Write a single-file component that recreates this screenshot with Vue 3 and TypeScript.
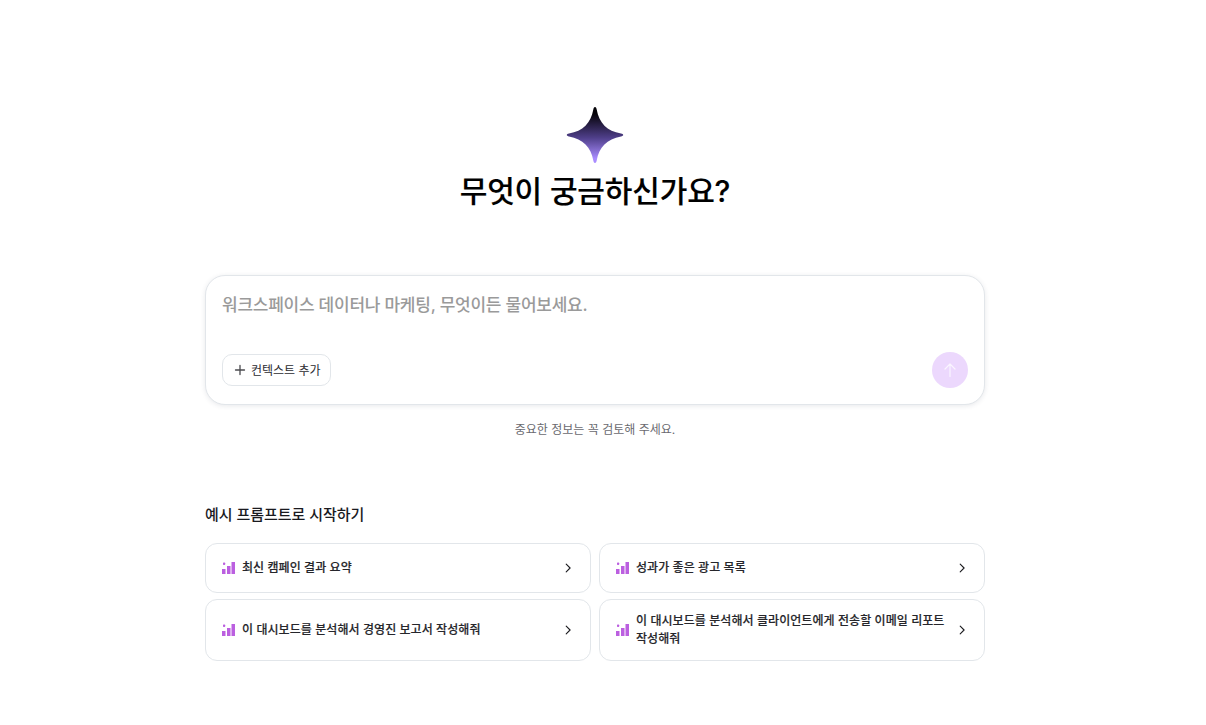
<template>
  <div class="page">
    <main class="content">
      <!-- 상단 로고 + 타이틀 -->
      <section class="hero">
        <svg class="spark" width="58" height="58" viewBox="0 0 58 58">
          <defs>
            <linearGradient id="sparkFill" x1="0" y1="0" x2="0" y2="1">
              <stop offset="0.12" stop-color="#050308" />
              <stop offset="0.55" stop-color="#4f3f8a" />
              <stop offset="0.92" stop-color="#a98cff" />
            </linearGradient>
          </defs>
          <path
            d="M29 1C30 1 30.4 2 30.7 3.5C33 17 41 25 55 27.6C56.4 27.9 57.2 28.3 57.2 29C57.2 29.7 56.4 30.1 55 30.4C41 33 33 41 30.7 54.5C30.4 56 30 57 29 57C28 57 27.6 56 27.3 54.5C25 41 17 33 3 30.4C1.6 30.1 .8 29.7 .8 29C.8 28.3 1.6 27.9 3 27.6C17 25 25 17 27.3 3.5C27.6 2 28 1 29 1Z"
            fill="url(#sparkFill)"
          />
        </svg>
        <h1>무엇이 궁금하신가요?</h1>
      </section>

      <!-- 입력 박스 -->
      <section class="composer">
        <div class="placeholder">워크스페이스 데이터나 마케팅, 무엇이든 물어보세요.</div>
        <div class="composer-foot">
          <button class="context-btn" type="button">
            <svg width="12" height="12" viewBox="0 0 12 12" fill="none" stroke="#4b4b4f" stroke-width="1.3" stroke-linecap="round">
              <path d="M6 1.5v9M1.5 6h9" />
            </svg>
            <span class="context-text">컨텍스트 추가</span>
          </button>
          <button class="send-btn" type="button" aria-label="전송">
            <svg width="16" height="16" viewBox="0 0 16 16" fill="none" stroke="#fff" stroke-opacity="0.75" stroke-width="1.2" stroke-linecap="round" stroke-linejoin="round">
              <path d="M8 14.5V2M3 7l5-5 5 5" />
            </svg>
          </button>
        </div>
      </section>
      <p class="notice">중요한 정보는 꼭 검토해 주세요.</p>

      <!-- 예시 프롬프트 -->
      <section class="examples">
        <h2>예시 프롬프트로 시작하기</h2>
        <div class="grid">
          <div v-for="item in prompts" :key="item.id" class="card" :class="{ tall: item.tall }">
            <svg class="bars" width="14" height="14" viewBox="0 0 14 14">
              <g fill="#bb5fe0">
                <rect x="1" y="1.5" width="2.2" height="2.4" rx="0.7" />
                <rect x="0" y="8" width="3.5" height="5" />
                <rect x="5" y="5" width="3.5" height="8" />
                <rect x="9.5" y="1" width="3.5" height="12" />
              </g>
            </svg>
            <span class="label">{{ item.title }}</span>
            <svg class="chevron" width="12" height="12" viewBox="0 0 12 12" fill="none" stroke="#1b1b1f" stroke-width="1.1" stroke-linecap="round" stroke-linejoin="round">
              <path d="M4.2 2.1L8.1 6 4.2 9.9" />
            </svg>
          </div>
        </div>
      </section>
    </main>
  </div>
</template>

<script setup lang="ts">
interface Prompt {
  id: number
  title: string
  tall?: boolean
}

const prompts: Prompt[] = [
  { id: 1, title: '최신 캠페인 결과 요약' },
  { id: 2, title: '성과가 좋은 광고 목록' },
  { id: 3, title: '이 대시보드를 분석해서 경영진 보고서 작성해줘', tall: true },
  { id: 4, title: '이 대시보드를 분석해서 클라이언트에게 전송할 이메일 리포트 작성해줘', tall: true }
]
</script>

<style>
html,
body {
  margin: 0;
  background: #fff;
}
</style>

<style scoped>
.page {
  min-height: 725px;
  padding-top: 106px;
  box-sizing: border-box;
  font-family: "Inter", "Noto Sans CJK KR", sans-serif;
  color: #111;
  word-break: keep-all;
}

.content {
  width: 780px;
  margin-left: 205px;
}

.hero {
  display: flex;
  flex-direction: column;
  align-items: center;
}

.spark {
  display: block;
}

h1 {
  margin: 5px 0 0;
  font-size: 30px;
  line-height: 44px;
  font-weight: 500;
  letter-spacing: -0.15px;
  color: #000;
  -webkit-text-stroke: 0.15px #000;
}

.composer {
  margin-top: 62px;
  height: 130px;
  box-sizing: border-box;
  padding: 16px 16px 16px;
  border: 1px solid #e2e6ea;
  border-radius: 20px;
  box-shadow: 0 1px 5px rgba(30, 40, 70, 0.1);
  display: flex;
  flex-direction: column;
  justify-content: space-between;
  background: #fff;
}

.placeholder {
  font-size: 17px;
  line-height: 26px;
  font-weight: 500;
  letter-spacing: -0.25px;
  color: #9a9a9a;
}

.composer-foot {
  display: flex;
  justify-content: space-between;
  align-items: center;
}

.context-btn {
  display: flex;
  align-items: center;
  gap: 5px;
  height: 32px;
  padding: 0 9px 0 11px;
  border: 1px solid #e2e6ea;
  border-radius: 10px;
  background: #fff;
  font-family: inherit;
  font-size: 12px;
  font-weight: 400;
  color: #2b2b30;
}

.context-text {
  padding-bottom: 2px;
}

.send-btn {
  width: 36px;
  height: 36px;
  padding: 0;
  border: 0;
  border-radius: 50%;
  background: #ecd8fd;
  display: flex;
  align-items: center;
  justify-content: center;
}

.notice {
  margin: 15px 0 0;
  text-align: center;
  font-size: 12px;
  line-height: 20px;
  color: #6a6a70;
}

.examples {
  margin-top: 64px;
}

h2 {
  margin: 0;
  font-size: 15px;
  line-height: 22px;
  font-weight: 500;
  letter-spacing: -0.05px;
  color: #1a1a1f;
}

.grid {
  margin-top: 17px;
  display: grid;
  grid-template-columns: 386px 386px;
  gap: 6px 8px;
}

.card {
  height: 50px;
  box-sizing: border-box;
  display: flex;
  align-items: center;
  padding: 0 16px;
  border: 1px solid #e2e6ea;
  border-radius: 12px;
  background: #fff;
}

.card.tall {
  height: 62px;
}

.bars {
  flex: none;
}

.label {
  flex: 1;
  margin: 0 10px 0 6px;
  font-size: 12px;
  line-height: 18px;
  font-weight: 500;
  letter-spacing: 0.07px;
  color: #26262b;
  -webkit-text-stroke: 0.15px #26262b;
}

.chevron {
  flex: none;
}
</style>
